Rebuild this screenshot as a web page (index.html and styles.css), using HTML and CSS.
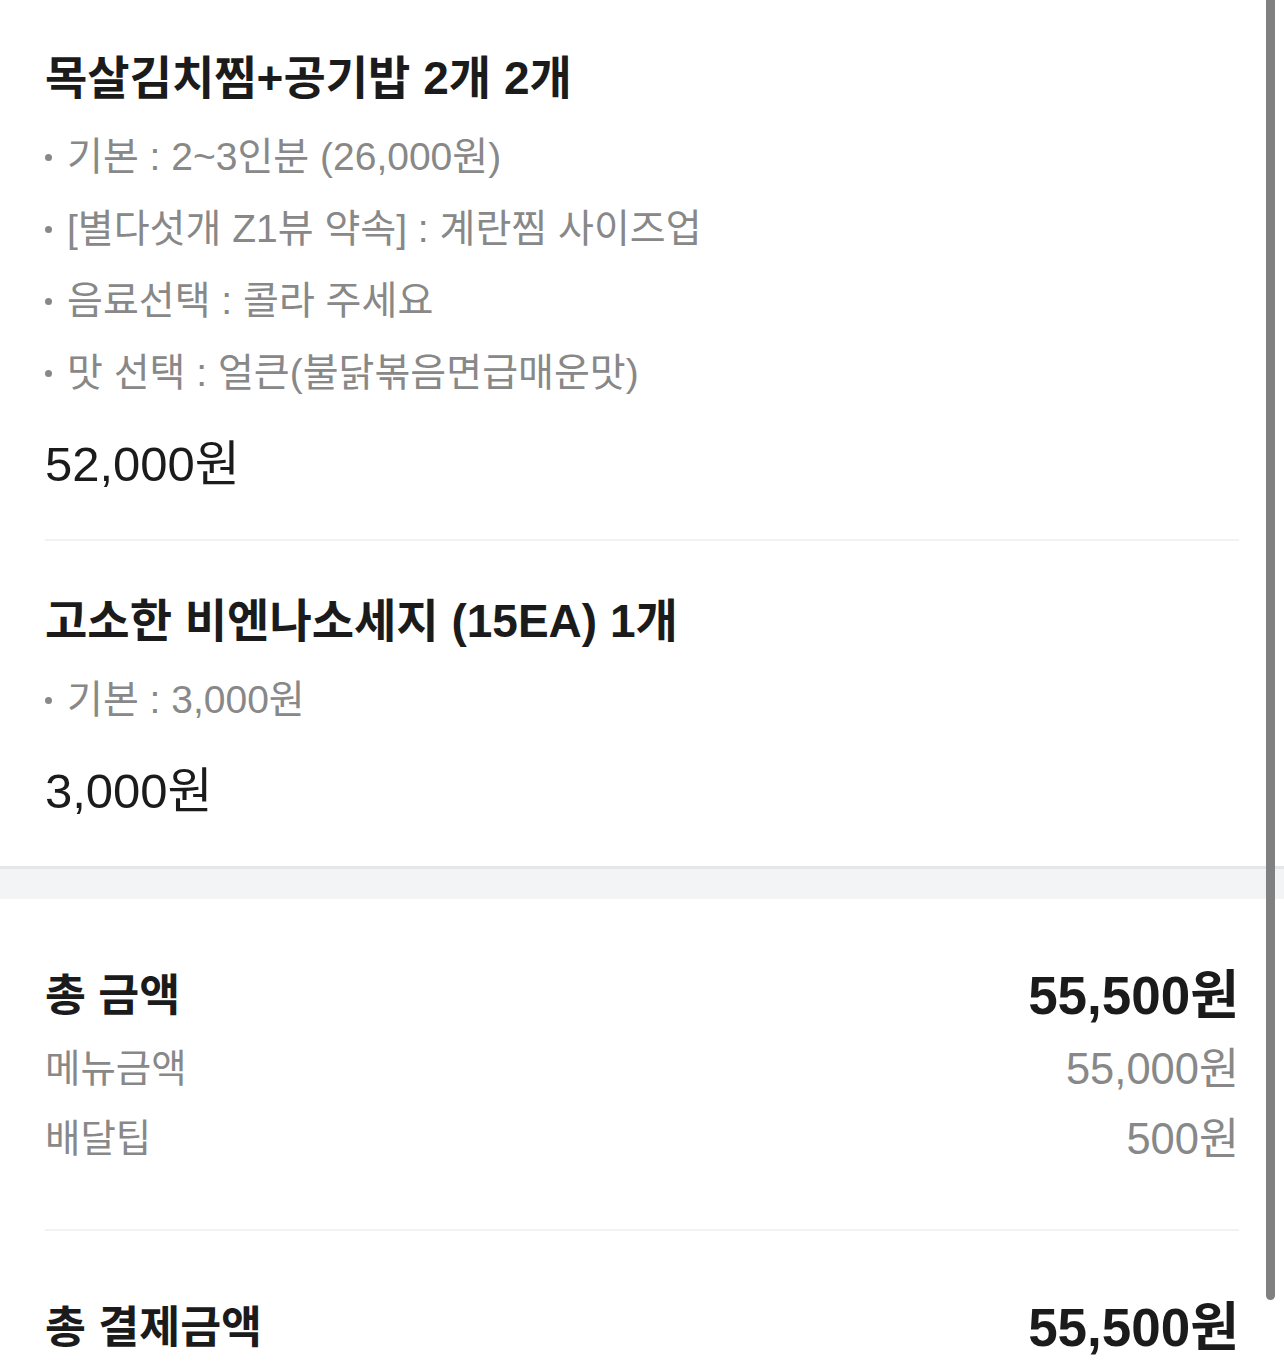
FILE: index.html
```html
<!DOCTYPE html>
<html lang="ko">
<head>
    <meta charset="UTF-8">
    <meta name="viewport" content="width=device-width, initial-scale=1.0">
    <title>주문 상세</title>
    <link rel="stylesheet" href="styles.css">
</head>
<body>
    <main class="order-detail">
        <section class="menu-list">
            <div class="menu-item">
                <h2 class="menu-name">목살김치찜+공기밥 2개 2개</h2>
                <ul class="option-list">
                    <li>기본 : 2~3인분 (26,000원)</li>
                    <li>[별다섯개 Z1뷰 약속] : 계란찜 사이즈업</li>
                    <li>음료선택 : 콜라 주세요</li>
                    <li>맛 선택 : 얼큰(불닭볶음면급매운맛)</li>
                </ul>
                <p class="menu-price">52,000원</p>
            </div>

            <div class="menu-item">
                <h2 class="menu-name">고소한 비엔나소세지 (15EA) 1개</h2>
                <ul class="option-list">
                    <li>기본 : 3,000원</li>
                </ul>
                <p class="menu-price">3,000원</p>
            </div>
        </section>

        <div class="section-gap"></div>

        <section class="summary">
            <div class="summary-group">
                <div class="summary-row summary-row--total">
                    <span class="summary-label">총 금액</span>
                    <span class="summary-amount">55,500원</span>
                </div>
                <div class="summary-row">
                    <span class="summary-label">메뉴금액</span>
                    <span class="summary-amount">55,000원</span>
                </div>
                <div class="summary-row">
                    <span class="summary-label">배달팁</span>
                    <span class="summary-amount">500원</span>
                </div>
            </div>

            <div class="summary-group">
                <div class="summary-row summary-row--total">
                    <span class="summary-label">총 결제금액</span>
                    <span class="summary-amount">55,500원</span>
                </div>
            </div>
        </section>
    </main>

    <!-- 오버레이 스크롤 표시 -->
    <div class="scroll-thumb"></div>
</body>
</html>
```

FILE: styles.css
```css
:root {
    --text-color: #1b1b1b;
    --sub-text-color: #888888;
    --divider-color: #f2f2f2;
    --gap-color: #f3f4f6;
    --side-padding: 45px;
}

* {
    margin: 0;
    padding: 0;
    box-sizing: border-box;
}

body {
    font-family: 'Liberation Sans', 'Noto Sans CJK KR', sans-serif;
    background-color: #ffffff;
    color: var(--text-color);
    overflow: hidden;
}

/* 메뉴 목록 */
.menu-item {
    margin: 0 var(--side-padding);
    padding: 50px 0 47px;
    border-bottom: 2px solid var(--divider-color);
}

.menu-item + .menu-item {
    padding-top: 52px;
}

.menu-item:last-child {
    border-bottom: none;
}

.menu-name {
    font-size: 46px;
    font-weight: 700;
    line-height: 56px;
}

.option-list {
    list-style: none;
    margin-top: 15px;
}

.option-list li {
    display: flex;
    align-items: center;
    font-size: 39px;
    line-height: 72px;
    color: var(--sub-text-color);
}

.option-list li::before {
    content: '';
    flex-shrink: 0;
    width: 7px;
    height: 7px;
    margin-right: 15px;
    border-radius: 50%;
    background-color: var(--sub-text-color);
}

.menu-price {
    margin-top: 27px;
    font-size: 49px;
    line-height: 56px;
}

/* 섹션 구분 */
.section-gap {
    height: 33px;
    border-top: 3px solid #e5e6e8;
    background-color: var(--gap-color);
}

/* 결제 금액 */
.summary-group {
    margin: 0 var(--side-padding);
    padding: 64px 0 59px;
    border-bottom: 2px solid var(--divider-color);
}

.summary-group:last-child {
    border-bottom: none;
}

.summary-row {
    display: flex;
    justify-content: space-between;
    align-items: center;
    height: 70px;
    color: var(--sub-text-color);
}

.summary-row .summary-label {
    font-size: 38.5px;
}

.summary-row .summary-amount {
    font-size: 43.5px;
}

.summary-row--total {
    height: 56px;
    margin-bottom: 11px;
    color: var(--text-color);
    font-weight: 700;
}

.summary-row--total .summary-label {
    font-size: 44.5px;
}

.summary-row--total .summary-amount {
    font-size: 53px;
}

.scroll-thumb {
    position: fixed;
    top: 0;
    right: 9px;
    width: 9px;
    height: 1300px;
    border-radius: 0 0 5px 5px;
    background-color: #808080;
}
```
